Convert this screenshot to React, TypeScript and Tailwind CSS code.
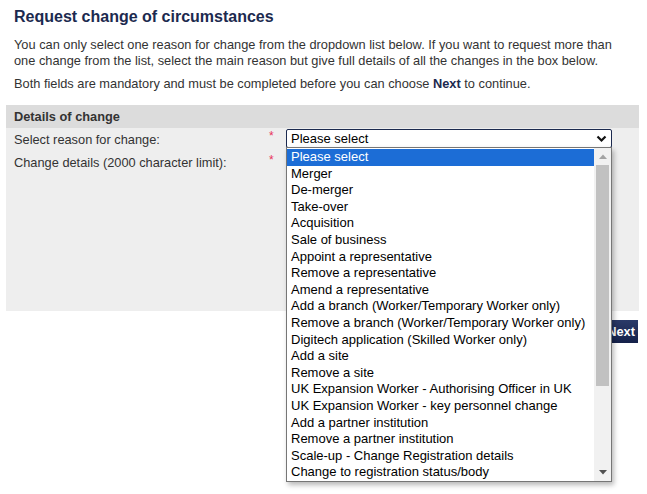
import React from "react";

const items = [
  "Please select",
  "Merger",
  "De-merger",
  "Take-over",
  "Acquisition",
  "Sale of business",
  "Appoint a representative",
  "Remove a representative",
  "Amend a representative",
  "Add a branch (Worker/Temporary Worker only)",
  "Remove a branch (Worker/Temporary Worker only)",
  "Digitech application (Skilled Worker only)",
  "Add a site",
  "Remove a site",
  "UK Expansion Worker - Authorising Officer in UK",
  "UK Expansion Worker - key personnel change",
  "Add a partner institution",
  "Remove a partner institution",
  "Scale-up - Change Registration details",
  "Change to registration status/body",
];

export default function App() {
  return (
    <div className="relative w-[647px] h-[494px] overflow-hidden bg-white font-['Liberation_Sans',Arial,sans-serif] text-[#333]">
      <div className="px-[14px] pt-[7px]">
        <h1 className="text-[16px] leading-[20px] font-bold text-[#1c2a4f]">
          Request change of circumstances
        </h1>
        <p className="mt-[10px] text-[12.8px] leading-[16px] pr-[4px]">
          You can only select one reason for change from the dropdown list below. If you want to request more than one change from the list, select the main reason but give full details of all the changes in the box below.
        </p>
        <p className="mt-[7px] text-[12.8px] leading-[16px]">
          Both fields are mandatory and must be completed before you can choose{" "}
          <span className="font-bold text-[#1c2a4f]">Next</span> to continue.
        </p>
      </div>

      <div className="mx-[6px] mt-[13px] w-[633px]">
        <div className="h-[23px] bg-[#dcdcdc] px-[8px] flex items-center text-[12.8px] font-bold text-[#333]">
          Details of change
        </div>
        <div className="h-[183px] bg-[#eeeeee] px-[8px] pt-[1px] text-[12.8px] leading-[16px]">
          <div className="flex items-start">
            <div className="w-[255px] mt-[3px]">Select reason for change:</div>
            <div className="w-[17px] text-[#e8335a] text-[12px] leading-[14px]">*</div>
            <div className="w-[326px] h-[19px] bg-white border border-[#1c2a4f] rounded-[2px] flex items-center justify-between pl-[4px] pr-[4px] text-[13px] text-black">
              <span>Please select</span>
              <svg width="11" height="8" viewBox="0 0 11 8">
                <path d="M1.5 1.5 L5.5 5.5 L9.5 1.5" stroke="#111" strokeWidth="2.2" fill="none" />
              </svg>
            </div>
          </div>
          <div className="flex items-start mt-[7px]">
            <div className="w-[255px]">Change details (2000 character limit):</div>
            <div className="w-[17px] text-[#e8335a] text-[12px] leading-[14px] -mt-[2px]">*</div>
            <textarea className="w-[322px] h-[140px] bg-white border border-[#999] resize-none" />
          </div>
        </div>
      </div>

      <div className="flex justify-end pr-[9px] mt-[9px]">
        <button className="h-[23px] pl-[14px] pr-[3px] bg-gradient-to-b from-[#2a3a68] to-[#15214a] text-white font-bold text-[12.8px]">
          Next
        </button>
      </div>

      <div className="absolute left-[286px] top-[147px] w-[326px] h-[335px] bg-white border border-[#767676] shadow-[2px_3px_5px_rgba(0,0,0,0.28)] flex">
        <div className="flex-1 pt-[1px] text-[13px] text-black">
          {items.map((t, i) => (
            <div
              key={t}
              className={
                i === 0
                  ? "h-[16.6px] leading-[16.6px] pl-[4px] bg-[#1c6dd6] text-white whitespace-nowrap"
                  : "h-[16.6px] leading-[16.6px] pl-[4px] whitespace-nowrap"
              }
            >
              {t}
            </div>
          ))}
        </div>
        <div className="w-[17px] bg-[#f1f1f1] flex flex-col items-center">
          <div className="h-[17px] w-full flex items-center justify-center">
            <svg width="8" height="5" viewBox="0 0 8 5">
              <path d="M0 5 L4 0.5 L8 5 Z" fill="#a3a3a3" />
            </svg>
          </div>
          <div className="w-[13px] h-[221px] bg-[#c1c1c1]" />
          <div className="flex-1" />
          <div className="h-[17px] w-full flex items-center justify-center">
            <svg width="8" height="5" viewBox="0 0 8 5">
              <path d="M0 0 L8 0 L4 4.5 Z" fill="#505050" />
            </svg>
          </div>
        </div>
      </div>
    </div>
  );
}
